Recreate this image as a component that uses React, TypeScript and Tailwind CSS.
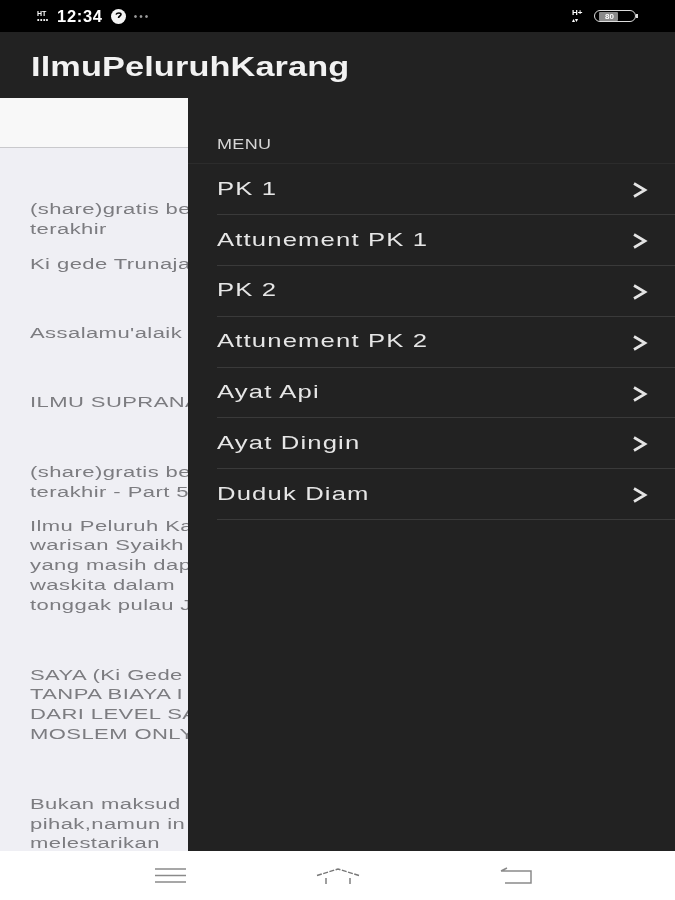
const menu = ["PK 1", "Attunement PK 1", "PK 2", "Attunement PK 2", "Ayat Api", "Ayat Dingin", "Duduk Diam"];

function Chevron() {
  return (
    <svg width="16" height="16" viewBox="0 0 16 16" fill="none" stroke="#e4e4e4" strokeWidth="2.700" className="mr-[27px] mt-[2px] blur-[0.4px]">
      <path d="M2 1.500l11 6.500-11 6.500" />
    </svg>
  );
}

function Para({ lines, className }: { lines: string[]; className: string }) {
  return (
    <div className={className}>
      {lines.map((l) => (
        <div key={l} className="whitespace-nowrap h-[19.8px] origin-left scale-x-[1.42]">{l}</div>
      ))}
    </div>
  );
}

export default function App() {
  return (
    <div className="w-[675px] h-[900px] flex flex-col overflow-hidden bg-white font-['Liberation_Sans',sans-serif]">
      {/* status bar */}
      <div className="h-[32px] bg-black flex items-center justify-between pl-[37px] pr-[37px] text-white">
        <div className="flex items-center blur-[0.4px]">
          <div className="flex flex-col w-[15px] mr-[5px]">
            <span className="text-[7px] font-bold leading-[7px]">HT</span>
            <span className="text-[7px] tracking-[0.5px] leading-[6px]">••••</span>
          </div>
          <span className="text-[16.5px] font-semibold tracking-[0.7px]">12:34</span>
          <svg width="17" height="17" viewBox="0 0 17 17" className="ml-[7px]">
            <circle cx="8.500" cy="8.500" r="7.500" fill="#f4f4f4" />
            <path d="M6 6.500c1-2 5-2 5 0 0 1.500-2.500 1.500-2.500 3.500" fill="none" stroke="#000" strokeWidth="1.600" />
          </svg>
          <span className="ml-[7px] text-[10px] tracking-[2px] text-[#9a9a9a]">•••</span>
        </div>
        <div className="flex items-center blur-[0.4px]">
          <div className="flex flex-col w-[15px] mr-[7px]">
            <span className="text-[8px] font-bold leading-[8px]">H+</span>
            <span className="text-[6px] leading-[6px]">▴▾</span>
          </div>
          <div className="w-[42px] h-[12px] rounded-full border border-[#ddd] flex items-center pl-[4px] text-[8px] font-bold">
            <span className="bg-[#8a8a8a] pl-[6px] pr-[4px] rounded-[1px] leading-[9px]">80</span>
          </div>
          <div className="w-[2px] h-[4px] bg-[#ddd]"></div>
        </div>
      </div>

      {/* app bar */}
      <div className="h-[65px] bg-[#222222] flex items-center pl-[31px] pt-[5px]">
        <h1 className="text-[27px] font-bold text-[#f2f2f2] tracking-[0.1px] blur-[0.4px] origin-left scale-x-[1.27]">IlmuPeluruhKarang</h1>
      </div>

      <div className="flex h-[754px]">
        {/* page behind the drawer */}
        <div className="w-[188px] bg-[#efeff4] overflow-hidden">
          <div className="h-[51px] bg-[#f8f8f8] border-t border-b border-t-[#222222] border-b-[#c9c9cc]"></div>
          <div className="pl-[30px] text-[15.5px] leading-[19.8px] text-[#7c7c80] tracking-[0.3px] blur-[0.5px]">
            <Para className="mt-[51px]" lines={["(share)gratis be", "terakhir"]} />
            <Para className="mt-[15px]" lines={["Ki gede Trunaja"]} />
            <Para className="mt-[50px]" lines={["Assalamu'alaik"]} />
            <Para className="mt-[49px]" lines={["ILMU SUPRANA"]} />
            <Para className="mt-[50px]" lines={["(share)gratis be", "terakhir - Part 5"]} />
            <Para className="mt-[14px]" lines={["Ilmu Peluruh Ka", "warisan Syaikh", "yang masih dap", "waskita dalam", "tonggak pulau J"]} />
            <Para className="mt-[50px]" lines={["SAYA (Ki Gede T", "TANPA BIAYA I", "DARI LEVEL SA", "MOSLEM ONLY"]} />
            <Para className="mt-[50px]" lines={["Bukan maksud", "pihak,namun in", "melestarikan"]} />
          </div>
        </div>

        {/* drawer */}
        <div className="flex-1 bg-[#222222] pt-[25px]">
          <div className="h-[42px] flex items-start pl-[29px] pt-[12px] border-b border-[#2c2c2c]">
            <span className="text-[15px] leading-[20px] text-[#d6d6d6] tracking-[0.3px] blur-[0.4px] origin-left scale-x-[1.2]">MENU</span>
          </div>
          {menu.map((item) => (
            <div key={item} className="ml-[29px] h-[50.9px] flex items-center justify-between border-b border-[#3a3a3a]">
              <span className="text-[19px] text-[#e6e6e6] tracking-[0.85px] blur-[0.4px] origin-left scale-x-[1.35]">{item}</span>
              <Chevron />
            </div>
          ))}
        </div>
      </div>

      {/* nav bar */}
      <div className="h-[49px] bg-white flex items-start pt-[16px] pl-[154px]">
        <svg width="34" height="18" viewBox="0 0 34 18" fill="none" stroke="#8a8a8a" strokeWidth="1.600" className="blur-[0.4px]">
          <path d="M1 2h31M1 8.500h31M1 15h31" />
        </svg>
        <svg width="44" height="20" viewBox="0 0 44 20" fill="none" stroke="#777777" strokeWidth="1.400" strokeDasharray="5 1.500" className="ml-[128px] blur-[0.3px]">
          <path d="M1 8.500L22 2l21 6.500" />
          <path d="M10 11v6M34 11v6" strokeDasharray="none" />
        </svg>
        <svg width="32" height="18" viewBox="0 0 32 18" fill="none" stroke="#8a8a8a" strokeWidth="1.500" className="ml-[140px] blur-[0.3px]">
          <path d="M1 4h30v12H5M1 4l6-3" />
        </svg>
      </div>
    </div>
  );
}
